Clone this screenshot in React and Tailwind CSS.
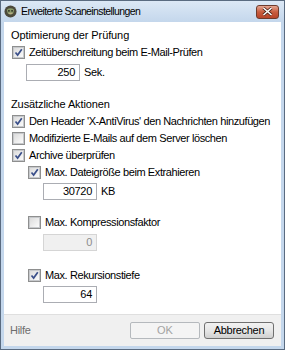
import React from "react";

const font = { fontFamily: '"Liberation Sans", Arial, sans-serif' };

const Check = ({ checked }) => (
  <span className="flex h-[13px] w-[13px] shrink-0 items-center justify-center border border-[#8e8f8f] bg-white">
    <span className="flex h-[11px] w-[11px] items-center justify-center border border-[#c7c9cc] bg-gradient-to-br from-[#dcdcdc] to-[#fbfbfb]">
      {checked && (
        <svg width="9" height="9" viewBox="0 0 9 9">
          <path d="M1.5 4.5 L3.6 7 L7.8 1.2" fill="none" stroke="#3a4f8a" strokeWidth="1.7" />
        </svg>
      )}
    </span>
  </span>
);

const Row = ({ checked, label, className = "" }) => (
  <div className={`flex h-[17px] items-center gap-[4px] ${className}`}>
    <Check checked={checked} />
    <span className="whitespace-nowrap text-[11px] leading-none tracking-[-0.4px] text-black">{label}</span>
  </div>
);

const NumBox = ({ value, unit, disabled, className = "" }) => (
  <div className={`flex items-center gap-[4px] ${className}`}>
    <div
      className={`flex h-[17px] w-[54px] items-center justify-end border pr-[4px] text-[11px] tracking-[-0.3px] ${
        disabled ? "border-[#d5d5d5] bg-[#f0f0f0] text-[#8d8d8d]" : "border-[#abadb3] bg-white text-black"
      }`}
    >
      {value}
    </div>
    {unit && <span className="text-[11px] tracking-[-0.3px] text-black">{unit}</span>}
  </div>
);

export default function App() {
  return (
    <div style={font} className="flex h-[350px] w-[285px] flex-col border border-[#5a6b80] bg-[#c4d7ec]">
      <div className="flex h-[21px] items-center bg-gradient-to-b from-[#dce8f5] to-[#c4d7ec] pl-[3px] pr-[5px]">
        <svg width="13" height="13" viewBox="0 0 14 14" className="mr-[4px] shrink-0">
          <circle cx="7" cy="7" r="6.5" fill="#4d4a3c" />
          <path d="M3 5 Q7 2 11 5 L10 9 Q7 12 4 9 Z" fill="#8a9a6a" />
          <circle cx="5.3" cy="6.3" r="1" fill="#2a2a20" />
          <circle cx="8.7" cy="6.3" r="1" fill="#2a2a20" />
          <path d="M5 9 L9 9" stroke="#c9b08a" strokeWidth="1" />
        </svg>
        <span className="text-[10.5px] tracking-[-0.6px] text-black">Erweiterte Scaneinstellungen</span>
        <div className="ml-auto flex h-[14px] w-[23px] items-center justify-center rounded-[3px] border border-[#6e3b2c] bg-gradient-to-b from-[#e4a591] via-[#c85d3f] to-[#b8452a]">
          <svg width="11" height="9" viewBox="0 0 11 9">
            <path d="M1.5 1 L9.5 8 M9.5 1 L1.5 8" stroke="#4a2218" strokeWidth="3" />
            <path d="M1.5 1 L9.5 8 M9.5 1 L1.5 8" stroke="#ffffff" strokeWidth="1.6" />
          </svg>
        </div>
      </div>
      <div className="flex flex-1 flex-col px-[3px] pb-[3px]">
        <div className="flex h-[292px] flex-col bg-white pl-[7px] pt-[5px]">
          <div className="flex h-[17px] items-center text-[11px] tracking-[-0.1px] text-black">Optimierung der Prüfung</div>
          <Row checked label="Zeitüberschreitung beim E-Mail-Prüfen" className="pl-[1px]" />
          <NumBox value="250" unit="Sek." className="ml-[15px] mt-[3px]" />
          <div className="mt-[15px] flex h-[17px] items-center text-[11px] tracking-[-0.1px] text-black">Zusätzliche Aktionen</div>
          <Row checked label="Den Header 'X-AntiVirus' den Nachrichten hinzufügen" className="pl-[1px]" />
          <Row label="Modifizierte E-Mails auf dem Server löschen" className="pl-[1px]" />
          <Row checked label="Archive überprüfen" className="pl-[1px]" />
          <Row checked label="Max. Dateigröße beim Extrahieren" className="pl-[17px]" />
          <NumBox value="30720" unit="KB" className="ml-[32px] mt-[2px]" />
          <Row label="Max. Kompressionsfaktor" className="mt-[14px] pl-[17px]" />
          <NumBox value="0" disabled className="ml-[32px] mt-[3px]" />
          <Row checked label="Max. Rekursionstiefe" className="mt-[16px] pl-[17px]" />
          <NumBox value="64" className="ml-[32px] mt-[2px]" />
        </div>
        <div className="flex flex-1 items-center border-t border-[#dfdfdf] bg-[#f0f0f0] pl-[6px] pr-[7px]">
          <span className="text-[11px] tracking-[-0.3px] text-[#6d6d6d]">Hilfe</span>
          <div className="ml-auto flex gap-[4px]">
            <div className="flex h-[17px] w-[70px] items-center justify-center rounded-[2px] border border-[#b5b9bd] bg-[#f4f4f4] text-[11px] text-[#a3a3a3]">
              OK
            </div>
            <div className="flex h-[17px] w-[70px] items-center justify-center rounded-[3px] border border-[#707070] bg-gradient-to-b from-[#f2f2f2] via-[#e6e6e6] to-[#d0d0d0] text-[11px] tracking-[-0.3px] text-black">
              Abbrechen
            </div>
          </div>
        </div>
      </div>
    </div>
  );
}
